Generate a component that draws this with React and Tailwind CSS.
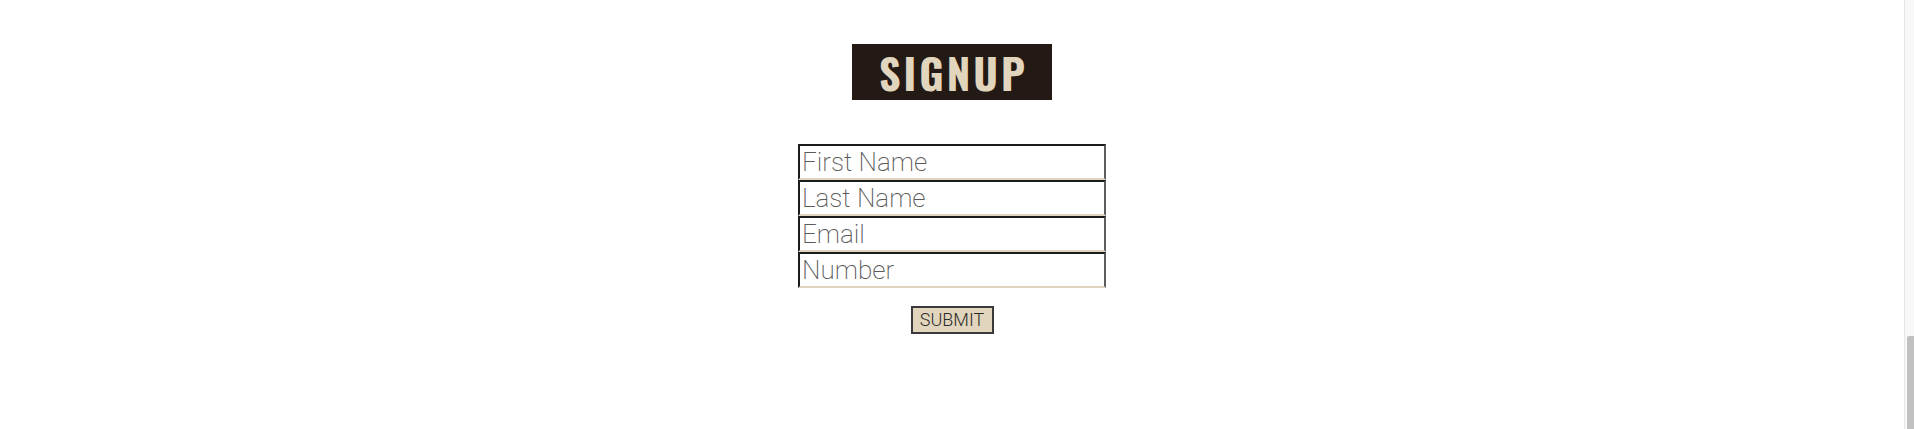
const fields = ["First Name", "Last Name", "Email", "Number"];

export default function App() {
  return (
    <div className="flex h-[429px] w-full overflow-hidden bg-white font-['Roboto',_'Liberation_Sans',_sans-serif]">
      <main className="flex flex-1 flex-col items-center pt-[44px]">
        <div className="flex h-[56px] w-[200px] items-center justify-center bg-[#231915]">
          <span className="pl-[3px] font-['Oswald',_'Roboto_Condensed',_sans-serif] text-[42px] font-bold leading-none tracking-[3px] text-[#e2d5bd]">
            SIGNUP
          </span>
        </div>
        <form className="mt-[44px] flex flex-col items-center">
          <div className="flex flex-col">
            {fields.map((f) => (
              <input
                key={f}
                type="text"
                placeholder={f}
                className="h-[36px] w-[308px] border-2 border-t-[#1c1c1c] border-r-[#5e5e5e] border-b-[#e0d4bf] border-l-[#1c1c1c] bg-white px-[2px] font-['Roboto',_sans-serif] text-[26px] font-extralight leading-none text-[#555] outline-none placeholder:text-[#5a5a5a]"
              />
            ))}
          </div>
          <button
            type="button"
            className="mt-[18px] flex h-[28px] w-[83px] items-center justify-center border-2 border-[#3a3a3a] bg-[#e2d5bd] font-['Roboto',_sans-serif] text-[18px] font-light leading-none text-[#2a2a2a]"
          >
            SUBMIT
          </button>
        </form>
      </main>
      <div className="flex h-full w-[10px] flex-col items-end justify-end border-l border-[#e6e6e6] bg-[#f8f8f8]">
        <div className="h-[93px] w-[7px] rounded-tl-[2px] bg-[#c1c1c1]"></div>
      </div>
    </div>
  );
}
